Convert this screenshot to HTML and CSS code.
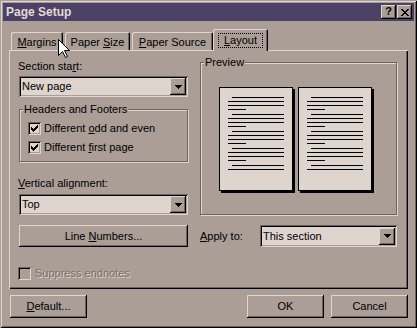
FILE: index.html
```html
<!DOCTYPE html>
<html lang="en">
<head>
    <meta charset="UTF-8">
    <meta name="viewport" content="width=device-width, initial-scale=1.0">
    <title>Page Setup</title>
    <link rel="stylesheet" href="styles.css">
</head>
<body>
    <div class="window">
        <!-- Title bar -->
        <div class="titlebar">
            <span class="title">Page Setup</span>
            <div class="title-buttons">
                <span class="tbtn tbtn-help">?</span>
                <span class="tbtn">
                    <svg width="8" height="7" viewBox="0 0 8 7"><path d="M0 0h2v1h-2zM6 0h2v1h-2zM1 1h2v1h-2zM5 1h2v1h-2zM2 2h4v1h-4zM3 3h2v1h-2zM2 4h4v1h-4zM1 5h2v1h-2zM5 5h2v1h-2zM0 6h2v1h-2zM6 6h2v1h-2z"/></svg>
                </span>
            </div>
        </div>

        <div class="dialog-body">
            <!-- Tabs -->
            <div class="tabs">
                <div class="tab tab-margins"><u>M</u>argins</div>
                <div class="tab tab-size">Paper <u>S</u>ize</div>
                <div class="tab tab-source"><u>P</u>aper Source</div>
                <div class="tab tab-layout active"><span class="focus"><u>L</u>ayout</span></div>
            </div>

            <!-- Layout tab page -->
            <div class="panel">
                <div class="row-top">
                    <div class="col-left">
                        <div class="label">Section sta<u>r</u>t:</div>
                        <div class="combo">
                            <span class="combo-text">New page</span>
                            <span class="combo-btn"><svg width="7" height="4" viewBox="0 0 7 4"><path d="M0 0h7v1h-1v1h-1v1h-1v1h-1v-1h-1v-1h-1v-1h-1z"/></svg></span>
                        </div>

                        <div class="group headers">
                            <div class="group-title">Headers and Footers</div>
                            <div class="check-row">
                                <span class="checkbox"><svg width="7" height="7" viewBox="0 0 7 7"><path d="M6 0h1v1h-1zM5 1h2v1h-2zM0 2h1v1h-1zM4 2h3v1h-3zM0 3h2v1h-2zM3 3h3v1h-3zM0 4h5v1h-5zM1 5h3v1h-3zM2 6h1v1h-1z"/></svg></span>
                                <span>Different <u>o</u>dd and even</span>
                            </div>
                            <div class="check-row">
                                <span class="checkbox"><svg width="7" height="7" viewBox="0 0 7 7"><path d="M6 0h1v1h-1zM5 1h2v1h-2zM0 2h1v1h-1zM4 2h3v1h-3zM0 3h2v1h-2zM3 3h3v1h-3zM0 4h5v1h-5zM1 5h3v1h-3zM2 6h1v1h-1z"/></svg></span>
                                <span>Different <u>f</u>irst page</span>
                            </div>
                        </div>

                        <div class="label label-valign"><u>V</u>ertical alignment:</div>
                        <div class="combo combo-valign">
                            <span class="combo-text">Top</span>
                            <span class="combo-btn"><svg width="7" height="4" viewBox="0 0 7 4"><path d="M0 0h7v1h-1v1h-1v1h-1v1h-1v-1h-1v-1h-1v-1h-1z"/></svg></span>
                        </div>
                    </div>

                    <div class="group preview">
                        <div class="group-title">Preview</div>
                        <div class="pages">
                            <div class="page">
                                <div class="para"><div class="ln first"></div><div class="ln"></div><div class="ln"></div><div class="ln short"></div></div>
                                <div class="para"><div class="ln first"></div><div class="ln"></div><div class="ln"></div><div class="ln short"></div></div>
                                <div class="para"><div class="ln first"></div><div class="ln"></div><div class="ln"></div><div class="ln short"></div></div>
                                <div class="para"><div class="ln first"></div><div class="ln"></div><div class="ln"></div><div class="ln short"></div></div>
                                <div class="para"><div class="ln first"></div><div class="ln"></div></div>
                            </div>
                            <div class="page">
                                <div class="para"><div class="ln first"></div><div class="ln"></div><div class="ln"></div><div class="ln short"></div></div>
                                <div class="para"><div class="ln first"></div><div class="ln"></div><div class="ln"></div><div class="ln short"></div></div>
                                <div class="para"><div class="ln first"></div><div class="ln"></div><div class="ln"></div><div class="ln short"></div></div>
                                <div class="para"><div class="ln first"></div><div class="ln"></div><div class="ln"></div><div class="ln short"></div></div>
                                <div class="para"><div class="ln first"></div><div class="ln"></div></div>
                            </div>
                        </div>
                    </div>
                </div>

                <div class="row-mid">
                    <div class="button btn-line"><span>Line <u>N</u>umbers...</span></div>
                    <div class="apply">
                        <span class="apply-label"><u>A</u>pply to:</span>
                        <div class="combo combo-apply">
                            <span class="combo-text">This section</span>
                            <span class="combo-btn"><svg width="7" height="4" viewBox="0 0 7 4"><path d="M0 0h7v1h-1v1h-1v1h-1v1h-1v-1h-1v-1h-1v-1h-1z"/></svg></span>
                        </div>
                    </div>
                </div>

                <div class="check-row disabled">
                    <span class="checkbox"></span>
                    <span>Suppress endnotes</span>
                </div>
            </div>

            <!-- Dialog buttons -->
            <div class="footer">
                <div class="button"><span><u>D</u>efault...</span></div>
                <div class="spacer"></div>
                <div class="button">OK</div>
                <div class="button">Cancel</div>
            </div>
        </div>

        <!-- Mouse pointer -->
        <svg class="cursor" width="13" height="20" viewBox="0 0 13 20"><path d="M0.5 0.5V16.5L4.5 12.5L7.5 18.5L9.5 17.5L6.5 11.5H11.5Z" fill="#fff" stroke="#000" stroke-width="1"/></svg>
    </div>
</body>
</html>
```

FILE: styles.css
```css
/* Basic Reset */
* {
    margin: 0;
    padding: 0;
    box-sizing: border-box;
}

body {
    background-color: #aa9e97;
    font-family: "Liberation Sans", Arial, sans-serif;
    font-size: 11px;
    line-height: 13px;
    color: #000;
}

u {
    text-underline-offset: 1px;
}

/* Window frame */
.window {
    position: relative;
    width: 417px;
    height: 328px;
    padding: 3px;
    background-color: #aa9e97;
    box-shadow: inset 1px 1px #aa9e97, inset -1px -1px #000,
                inset 2px 2px #ddd5ce, inset -2px -2px #6e6560;
    display: flex;
    flex-direction: column;
}

.titlebar {
    height: 18px;
    background-color: #4b4166;
    display: flex;
    align-items: center;
    justify-content: space-between;
    padding: 0 2px 0 3px;
}

.title {
    color: #e4dcd4;
    font-weight: bold;
    font-size: 12px;
}

.title-buttons {
    display: flex;
    gap: 1px;
}

.tbtn {
    width: 15px;
    height: 14px;
    display: flex;
    align-items: center;
    justify-content: center;
    background-color: #aa9e97;
    box-shadow: inset -1px -1px #000, inset 1px 1px #ddd5ce, inset -2px -2px #6e6560;
}

.tbtn-help {
    font-weight: bold;
    font-size: 11px;
    padding-bottom: 1px;
}

/* Body */
.dialog-body {
    padding: 8px 6px 0 6px;
    flex: 1;
    display: flex;
    flex-direction: column;
}

/* Tabs */
.tabs {
    height: 21px;
    display: flex;
    align-items: flex-end;
    padding-left: 2px;
}

.tab {
    height: 18px;
    padding-top: 4px;
    margin-right: 2px;
    text-align: center;
    border-radius: 2px 2px 0 0;
    box-shadow: inset 1px 1px #ddd5ce, inset -1px 0 #000, inset -2px 0 #6e6560;
}

.tab-margins { width: 52px; }
.tab-size { width: 65px; }
.tab-source { width: 81px; }

.tab-layout {
    width: 55px;
    height: 22px;
    margin: 0 0 -1px -2px;
    padding-top: 4px;
    position: relative;
    z-index: 1;
    background-color: #aa9e97;
}

.focus {
    display: inline-block;
    padding: 1px 6px;
    outline: 1px dotted #000;
    outline-offset: -1px;
}

/* Tab page */
.panel {
    height: 239px;
    padding: 10px 10px 0 10px;
    box-shadow: inset 1px 1px #ddd5ce, inset -1px -1px #000, inset -2px -2px #6e6560;
}

.row-top {
    display: flex;
    gap: 12px;
}

.col-left {
    width: 169px;
    display: flex;
    flex-direction: column;
}

.label {
    margin-left: -1px;
}

.label-valign {
    margin-top: 15px;
}

/* Combo boxes */
.combo {
    height: 21px;
    margin-top: 3px;
    padding: 2px;
    display: flex;
    align-items: center;
    background-color: #ddd5ce;
    box-shadow: inset 1px 1px #6e6560, inset -1px -1px #ddd5ce,
                inset 2px 2px #000, inset -2px -2px #aa9e97;
}

.combo-valign {
    margin-top: 4px;
}

.combo-text {
    flex: 1;
    padding-left: 1px;
}

.combo-btn {
    width: 16px;
    height: 17px;
    display: flex;
    align-items: center;
    justify-content: center;
    background-color: #aa9e97;
    box-shadow: inset -1px -1px #000, inset 1px 1px #ddd5ce, inset -2px -2px #6e6560;
}

/* Group boxes */
.group {
    border: 1px solid #6e6560;
    box-shadow: inset 1px 1px #ddd5ce, 1px 1px #ddd5ce;
    display: flex;
    flex-direction: column;
    padding: 0 8px 7px 8px;
}

.group-title {
    align-self: flex-start;
    margin: -7px 0 0 -5px;
    padding: 0 1px;
    background-color: #aa9e97;
}

.headers {
    margin-top: 12px;
}

.check-row {
    display: flex;
    align-items: center;
    gap: 3px;
    height: 13px;
    margin-top: 6px;
}

.checkbox {
    width: 13px;
    height: 13px;
    display: flex;
    align-items: center;
    justify-content: center;
    background-color: #ddd5ce;
    box-shadow: inset 1px 1px #6e6560, inset -1px -1px #ddd5ce,
                inset 2px 2px #000, inset -2px -2px #aa9e97;
}

.check-row.disabled {
    margin-top: 20px;
    margin-left: -1px;
    gap: 4px;
    color: #7a706a;
    text-shadow: 1px 1px #ddd5ce;
}

.check-row.disabled .checkbox {
    background-color: #aa9e97;
}

/* Preview */
.preview {
    width: 197px;
    height: 153px;
    margin-top: 2px;
}

.pages {
    display: flex;
    gap: 5px;
    margin: 18px 0 0 10px;
}

.page {
    width: 74px;
    height: 104px;
    padding: 9px 8px 0 8px;
    border: 1px solid #000;
    background-color: #ddd5ce;
    box-shadow: 2px 2px 0 #000;
}

.para {
    margin-bottom: 4px;
}

.ln {
    height: 1px;
    margin-bottom: 3px;
    background-color: #000;
}

.ln.first {
    margin-left: 4px;
}

.ln.short {
    width: 18px;
}

/* Buttons */
.button {
    height: 23px;
    width: 77px;
    display: flex;
    align-items: center;
    justify-content: center;
    background-color: #aa9e97;
    box-shadow: inset -1px -1px #000, inset 1px 1px #ddd5ce, inset -2px -2px #6e6560;
}

.row-mid {
    display: flex;
    gap: 12px;
    margin-top: 10px;
}

.btn-line {
    width: 169px;
    height: 22px;
}

.apply {
    display: flex;
    align-items: center;
}

.apply-label {
    width: 60px;
}

.combo-apply {
    width: 137px;
    height: 22px;
    margin-top: 0;
}

.footer {
    display: flex;
    gap: 7px;
    margin-top: 6px;
    padding-left: 1px;
}

.spacer {
    flex: 1;
}

/* Pointer drawn over the tabs */
.cursor {
    position: absolute;
    left: 58px;
    top: 39px;
}
```
